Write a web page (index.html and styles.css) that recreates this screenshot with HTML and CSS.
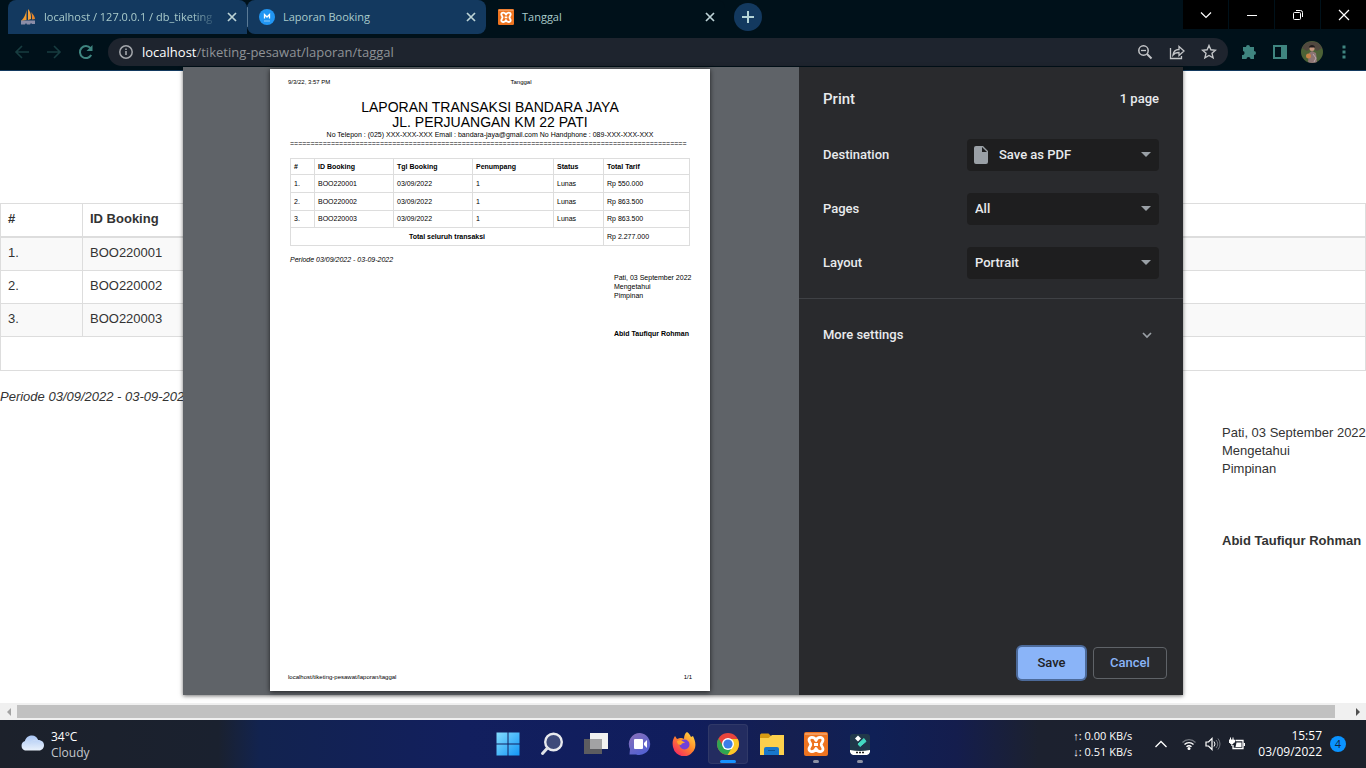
FILE: index.html
```html
<!DOCTYPE html>
<html lang="id">
<head>
<meta charset="utf-8">
<title>Tanggal</title>
<link rel="stylesheet" href="styles.css">
</head>
<body>
<svg class="defs" aria-hidden="true">
  <symbol id="close" viewBox="0 0 12 12"><path d="M2 2l8 8M10 2l-8 8" stroke="currentColor" stroke-width="1.7"/></symbol>
  <symbol id="xampp" viewBox="0 0 24 24">
    <rect width="24" height="24" rx="2" fill="#ee7420"/>
    <path d="M1 1h22v2H1z" fill="#f39a5b"/>
    <path d="M12 8.500c-1.500-4-7-4-7-.5 0 2 1.800 2.800 1.800 4.500S5 15 5 17c0 3.500 5.500 3.500 7-.5 1.500 4 7 4 7 .5 0-2-1.800-2.800-1.800-4.500S19 10 19 8c0-3.500-5.500-3.500-7 .5zM10 12.500h4" fill="none" stroke="#fff" stroke-width="2.800" stroke-linejoin="round"/>
  </symbol>
  <symbol id="caret" viewBox="0 0 10 5"><path d="M0 0h10L5 5z" fill="#9aa0a6"/></symbol>
</svg>

<header class="tabstrip">
  <nav class="tabs">
    <div class="tab">
      <svg class="favicon" viewBox="0 0 16 16"><path d="M6.500 1v10L1 12c3-3 4.500-6 5.500-11z" fill="#f29b2e"/><path d="M8 0c3 3 3 7 3 10l-3 1z" fill="#f7a23b"/><path d="M11 3c2 2 4 5 4 7l-3 .5c0-3 0-5-1-7.500z" fill="#e8862a"/><path d="M1 11.500h14v3.500h-3l-1-1-1 1.500H7L6 14l-1 1.500H1z" fill="#8b8da8"/></svg>
      <span class="tab-title faded">localhost / 127.0.0.1 / db_tiketing</span>
      <button class="tab-close" aria-label="Close tab"><svg><use href="#close"/></svg></button>
    </div>
    <div class="tab divided">
      <svg class="favicon" viewBox="0 0 16 16"><circle cx="8" cy="8" r="8" fill="#2196f3"/><path d="M5.500 9.500V5.500L8 8l2.500-2.500v4" fill="none" stroke="#fff" stroke-width="1.300"/><path d="M5 12h6" stroke="#8fcaf9"/></svg>
      <span class="tab-title">Laporan Booking</span>
      <button class="tab-close" aria-label="Close tab"><svg><use href="#close"/></svg></button>
    </div>
    <div class="tab active">
      <svg class="favicon"><use href="#xampp"/></svg>
      <span class="tab-title">Tanggal</span>
      <button class="tab-close" aria-label="Close tab"><svg><use href="#close"/></svg></button>
    </div>
    <button class="new-tab" aria-label="New tab"><svg viewBox="0 0 12 12"><path d="M6 0v12M0 6h12" stroke="currentColor" stroke-width="2"/></svg></button>
  </nav>
  <div class="window-controls">
    <button aria-label="Search tabs"><svg viewBox="0 0 12 12"><path d="M1 3.500l5 5 5-5" fill="none" stroke="#fff" stroke-width="1.200"/></svg></button>
    <button aria-label="Minimize"><svg viewBox="0 0 12 12"><path d="M1 6.500h10" stroke="#fff"/></svg></button>
    <button aria-label="Restore"><svg viewBox="0 0 12 12"><rect x="1.500" y="3.500" width="7" height="7" rx="1" fill="none" stroke="#fff"/><path d="M4 1.500h4.500a2 2 0 0 1 2 2V8" fill="none" stroke="#fff"/></svg></button>
    <button aria-label="Close"><svg viewBox="0 0 12 12"><path d="M1 1l10 10M11 1L1 11" stroke="#fff" stroke-width="1.200"/></svg></button>
  </div>
</header>

<div class="toolbar">
  <div class="nav-buttons">
    <button class="dim" aria-label="Back"><svg viewBox="0 0 16 16"><path d="M15 8H2M8 2L2 8l6 6" fill="none" stroke="currentColor" stroke-width="1.600"/></svg></button>
    <button class="dim" aria-label="Forward"><svg viewBox="0 0 16 16"><path d="M1 8h13M8 2l6 6-6 6" fill="none" stroke="currentColor" stroke-width="1.600"/></svg></button>
    <button aria-label="Reload"><svg viewBox="0 0 16 16"><path d="M13.200 11A6 6 0 1 1 12.500 4.200" fill="none" stroke="currentColor" stroke-width="2"/><path d="M14.500 1v6h-6z" fill="currentColor"/></svg></button>
  </div>
  <div class="address">
    <svg class="info" viewBox="0 0 16 16"><circle cx="8" cy="8" r="6.200" fill="none" stroke="currentColor" stroke-width="1.500"/><path d="M8 7v4M8 4.500V6" stroke="currentColor" stroke-width="1.600"/></svg>
    <span class="url"><b>localhost</b>/tiketing-pesawat/laporan/taggal</span>
    <button aria-label="Zoom"><svg viewBox="0 0 16 16"><circle cx="6.500" cy="6.500" r="4.700" fill="none" stroke="currentColor" stroke-width="1.500"/><path d="M10 10l4.500 4.500" stroke="currentColor" stroke-width="2"/><path d="M4 6.500h5" stroke="currentColor" stroke-width="1.300"/></svg></button>
    <button aria-label="Share"><svg viewBox="0 0 16 16"><path d="M1.500 4v10.500h11V12" fill="none" stroke="currentColor" stroke-width="1.300"/><path d="M4 11c.5-4 3-5.500 6-5.500V2.500L15 7l-5 4.500v-3C7 8.500 5.500 9 4 11z" fill="none" stroke="currentColor" stroke-width="1.300"/></svg></button>
    <button aria-label="Bookmark"><svg viewBox="0 0 16 16"><path d="M8 1.500l1.900 4.300 4.600.4-3.500 3.100 1.100 4.600L8 11.500l-4.100 2.400L5 9.300 1.500 6.200l4.600-.4z" fill="none" stroke="currentColor" stroke-width="1.400"/></svg></button>
  </div>
  <div class="toolbar-actions">
    <button aria-label="Extensions"><svg viewBox="0 0 16 16"><path d="M2 3h3a2 2 0 0 1 4 0h4v4a2 2 0 0 1 0 4v4H9.500a2 2 0 0 0-4 0H1v-4a2 2 0 0 0 1-4z" fill="currentColor"/></svg></button>
    <button aria-label="Side panel"><svg viewBox="0 0 16 16"><path d="M1 1h14v14H1zM3 3v10h6V3z" fill="currentColor" fill-rule="evenodd"/></svg></button>
    <button class="profile" aria-label="Profile"><svg viewBox="0 0 22 22"><circle cx="11" cy="11" r="11" fill="#4c6236"/><path d="M1 7a11 11 0 0 1 20 0l-5 3-5-4-5 4z" fill="#51483f"/><path d="M7 21l1-9 3-2 4 2 1 9a11 11 0 0 1-9 0z" fill="#8d7574"/><circle cx="11" cy="7.500" r="2.500" fill="#c5977e"/><path d="M8 6.500C8 3 14 3 14 6.500z" fill="#201b1d"/><circle cx="7.500" cy="15" r="2.500" fill="#c88346"/><path d="M12 13l3 4-2 4" stroke="#bba9ad" fill="none"/></svg></button>
    <button aria-label="Menu"><svg viewBox="0 0 16 16"><path d="M6.500 1.500h3v3h-3zM6.500 6.500h3v3h-3zM6.500 11.500h3v3h-3z" fill="currentColor"/></svg></button>
  </div>
</div>

<main class="viewport">
  <section class="report">
    <table class="report-table">
      <thead><tr><th class="col-no">#</th><th>ID Booking</th></tr></thead>
      <tbody>
        <tr><td>1.</td><td>BOO220001</td></tr>
        <tr><td>2.</td><td>BOO220002</td></tr>
        <tr><td>3.</td><td>BOO220003</td></tr>
        <tr><td colspan="2">&nbsp;</td></tr>
      </tbody>
    </table>
    <p class="period">Periode 03/09/2022 - 03-09-2022</p>
    <div class="signature">
      <p>Pati, 03 September 2022</p>
      <p>Mengetahui</p>
      <p>Pimpinan</p>
      <p class="signer">Abid Taufiqur Rohman</p>
    </div>
  </section>

  <section class="print-dialog" role="dialog" aria-label="Print">
    <div class="preview">
      <article class="sheet">
        <div class="sheet-head"><span>9/3/22, 3:57 PM</span><span>Tanggal</span><span></span></div>
        <h1>LAPORAN TRANSAKSI BANDARA JAYA<br>JL. PERJUANGAN KM 22 PATI</h1>
        <p class="contact">No Telepon : (025) XXX-XXX-XXX Email : bandara-jaya@gmail.com No Handphone : 089-XXX-XXX-XXX</p>
        <p class="rule">=================================================================================================</p>
        <table class="sheet-table">
          <colgroup><col class="c1"><col class="c2"><col class="c3"><col class="c4"><col class="c5"><col class="c6"></colgroup>
          <thead><tr><th>#</th><th>ID Booking</th><th>Tgl Booking</th><th>Penumpang</th><th>Status</th><th>Total Tarif</th></tr></thead>
          <tbody>
            <tr><td>1.</td><td>BOO220001</td><td>03/09/2022</td><td>1</td><td>Lunas</td><td>Rp 550.000</td></tr>
            <tr><td>2.</td><td>BOO220002</td><td>03/09/2022</td><td>1</td><td>Lunas</td><td>Rp 863.500</td></tr>
            <tr><td>3.</td><td>BOO220003</td><td>03/09/2022</td><td>1</td><td>Lunas</td><td>Rp 863.500</td></tr>
            <tr><th class="total" colspan="5">Total seluruh transaksi</th><td>Rp 2.277.000</td></tr>
          </tbody>
        </table>
        <p class="sheet-period">Periode 03/09/2022 - 03-09-2022</p>
        <div class="sheet-signature">
          <p>Pati, 03 September 2022</p>
          <p>Mengetahui</p>
          <p>Pimpinan</p>
          <p class="sheet-signer">Abid Taufiqur Rohman</p>
        </div>
        <footer class="sheet-foot"><span>localhost/tiketing-pesawat/laporan/taggal</span><span>1/1</span></footer>
      </article>
    </div>
    <form class="settings">
      <div class="settings-head"><h2>Print</h2><span>1 page</span></div>
      <div class="field">
        <label for="destination">Destination</label>
        <div class="picker with-icon">
          <svg class="file" viewBox="0 0 14 18"><path d="M2 0h7l5 5v11a2 2 0 0 1-2 2H2a2 2 0 0 1-2-2V2a2 2 0 0 1 2-2zm6 1v5h5z" fill="#9aa0a6" fill-rule="evenodd"/></svg>
          <select id="destination"><option>Save as PDF</option></select>
          <svg class="arrow"><use href="#caret"/></svg>
        </div>
      </div>
      <div class="field">
        <label for="pages">Pages</label>
        <div class="picker"><select id="pages"><option>All</option></select><svg class="arrow"><use href="#caret"/></svg></div>
      </div>
      <div class="field">
        <label for="layout">Layout</label>
        <div class="picker"><select id="layout"><option>Portrait</option></select><svg class="arrow"><use href="#caret"/></svg></div>
      </div>
      <button type="button" class="more">More settings<svg viewBox="0 0 10 10"><path d="M1 3l4 4 4-4" fill="none" stroke="#9aa0a6" stroke-width="1.700"/></svg></button>
      <div class="actions">
        <button type="button" class="save">Save</button>
        <button type="button" class="cancel">Cancel</button>
      </div>
    </form>
  </section>
</main>

<div class="scrollbar">
  <button aria-label="Scroll left"><svg viewBox="0 0 8 8"><path d="M6 0v8L2 4z" fill="#a3a3a3"/></svg></button>
  <div class="thumb"></div>
  <button aria-label="Scroll right"><svg viewBox="0 0 8 8"><path d="M2 0v8l4-4z" fill="#505050"/></svg></button>
</div>

<footer class="taskbar">
  <div class="weather">
    <svg viewBox="0 0 24 16"><defs><linearGradient id="cl" x2="0" y2="1"><stop stop-color="#a9c6f5"/><stop offset="1" stop-color="#e9f1fb"/></linearGradient></defs><path d="M5 15.500a5 5 0 0 1 0-9.500C6 2 9 .5 12 .5S17 2 18 5c4 0 6 2.500 6 5.200s-2 5.300-5 5.300z" fill="url(#cl)"/><path d="M5 6c3 0 4 1 5 3 1-3 4-4 8-4" fill="none" stroke="#c8dbf6"/></svg>
    <div><p>34°C</p><p class="muted">Cloudy</p></div>
  </div>
  <nav class="apps">
    <button aria-label="Start"><svg viewBox="0 0 24 24"><defs><linearGradient id="win" x2="1" y2="1"><stop stop-color="#84dcff"/><stop offset="1" stop-color="#1296f5"/></linearGradient></defs><path d="M0.500 0.500h11v11h-11zM12.500 0.500h11v11h-11zM0.500 12.500h11v11h-11zM12.500 12.500h11v11h-11z" fill="url(#win)"/></svg></button>
    <button aria-label="Search"><svg viewBox="0 0 24 24"><circle cx="13.500" cy="10" r="8.300" fill="#3d4a7a" stroke="#e8eaee" stroke-width="2.400"/><path d="M7.500 16l-5 5.500" stroke="#dfe2e8" stroke-width="3" stroke-linecap="round"/></svg></button>
    <button aria-label="Task view"><svg viewBox="0 0 24 24"><path d="M0 7h18v15H0z" fill="#5c5c60"/><path d="M6 1h18v16H6z" fill="#f1f1f1"/><path d="M6 7h12v10H6z" fill="#a2a2a4"/></svg></button>
    <button aria-label="Chat"><svg viewBox="0 0 24 24"><defs><linearGradient id="ch" x2=".6" y2="1"><stop stop-color="#8b70b8"/><stop offset="1" stop-color="#5361d2"/></linearGradient></defs><path d="M12 1a11 11 0 1 1-4 21.500H1.500L2 17A11 11 0 0 1 12 1z" fill="url(#ch)"/><rect x="6" y="7" width="9" height="10" rx="1" fill="#fff"/><path d="M16 11l3-3v8l-3-3z" fill="#fff"/></svg></button>
    <button aria-label="Firefox"><svg viewBox="0 0 24 24"><defs><linearGradient id="ff" x1="1" x2=".2" y2="1"><stop stop-color="#ffe84a"/><stop offset=".5" stop-color="#ff8a2a"/><stop offset="1" stop-color="#f52463"/></linearGradient></defs><path d="M15 0c2 1 3 3 4 5l2-1c2 4 3 8 2 12a11.300 11.300 0 0 1-22-1C0 10 1 7 3 4l2 3 3-1c2 0 3 0 4 1 0-3 1-6 3-7z" fill="url(#ff)"/><circle cx="12.500" cy="12.500" r="5" fill="#7040d8"/><path d="M5 9c4-2 6 0 8 2-2 0-3 0-4 2-2 0-4-1-4-4z" fill="#ffa52c"/></svg></button>
    <button class="current" aria-label="Chrome"><svg viewBox="0 0 24 24"><circle cx="12" cy="12" r="11" fill="#e8453c"/><path d="M2.500 6.500A11 11 0 0 0 12 23l5-8-5-3-5 2z" fill="#2ea551"/><path d="M12 7h9.800A11 11 0 0 1 11.500 23L17 14z" fill="#fbc928"/><circle cx="12" cy="12" r="6" fill="#fff"/><circle cx="12" cy="12" r="4.600" fill="#3b7de9"/></svg></button>
    <button aria-label="File Explorer"><svg viewBox="0 0 24 24"><path d="M0 3.500C0 2 1 1.500 2 1.500h6.500L11 4v3H0z" fill="#d99b12"/><path d="M0 6h8.500L12 3h12v20H0z" fill="#fdd04c"/><path d="M4 23v-6q0-2 2-2h11q2 0 2 2v6z" fill="#1876ca"/><path d="M8 18.500h7" stroke="#11528f"/></svg></button>
    <button class="running" aria-label="XAMPP"><svg><use href="#xampp"/></svg></button>
    <button class="running" aria-label="Filmora"><svg viewBox="0 0 24 24"><rect x="2" y="2" width="20" height="20" rx="3" fill="#20384a"/><path d="M10 12l6-5.500 2 3-6 5z" fill="#43dcc0" stroke="#43dcc0"/><path d="M10 3.500l3 3-3 3-3-3z" fill="#fff"/><path d="M2 18q10 2 20 0v2q-1 3-3 3H5q-2 0-3-3z" fill="#fff"/><path d="M8 20.500h8" stroke="#222" stroke-width="1.500" stroke-dasharray="2 1"/></svg></button>
  </nav>
  <div class="tray">
    <div class="speed"><p>↑: 0.00 KB/s</p><p>↓: 0.51 KB/s</p></div>
    <button class="chevron" aria-label="Hidden icons"><svg viewBox="0 0 16 16"><path d="M2.500 11L8 5.500l5.500 5.500" fill="none" stroke="#fff" stroke-width="1.300"/></svg></button>
    <div class="status">
      <svg viewBox="0 0 16 16"><path d="M1.500 6.500a9 9 0 0 1 13 0" fill="none" stroke="#73777f" stroke-width="1.200"/><path d="M3.500 8.500a6.300 6.300 0 0 1 9 0M5.500 10.800a3.500 3.500 0 0 1 5 0" fill="none" stroke="#fff" stroke-width="1.300"/><circle cx="8" cy="12.500" r="1.500" fill="#fff"/></svg>
      <svg viewBox="0 0 16 16"><path d="M1 6h2.500L7 2.500v11L3.500 10H1z" fill="none" stroke="#fff" stroke-width="1.200"/><path d="M9 5.500q2 2.500 0 5" fill="none" stroke="#fff"/><path d="M11 4q3.500 4 0 8M13 2.500q4 5.500 0 11" fill="none" stroke="#73777f"/></svg>
      <svg viewBox="0 0 16 16"><path d="M6.500 4.500h7.500v8H4V9" fill="none" stroke="#fff" stroke-width="1.300"/><path d="M7.500 6.500h5v4.500h-6z" fill="#fff"/><path d="M15.300 7v3" stroke="#fff" stroke-width="1.400"/><path d="M1.500 1.500V4M4 1.500V4M0 4h5.500v2L4 7.500H1.500L0 6zM2.800 7.500V10" fill="#fff" stroke="#fff"/></svg>
    </div>
    <div class="clock"><p>15:57</p><p>03/09/2022</p></div>
    <span class="badge">4</span>
  </div>
</footer>
</body>
</html>
```

FILE: styles.css
```css
* { box-sizing: border-box; }

body {
  margin: 0;
  height: 100vh;
  display: flex;
  flex-direction: column;
  overflow: hidden;
  background: #fff;
  font: 12px/16px "Open Sans", sans-serif;
}

p, h1, h2 { margin: 0; font-weight: 400; }

button {
  border: 0;
  padding: 0;
  background: none;
  color: inherit;
  font: inherit;
  display: flex;
  align-items: center;
  justify-content: center;
}

svg { display: block; flex: none; }
.defs { position: absolute; width: 0; height: 0; }

/* Tab strip */
.tabstrip {
  height: 34px;
  display: flex;
  justify-content: space-between;
  align-items: flex-start;
  background: #00111a;
  color: #a9cbcb;
}
.tabs { display: flex; align-items: center; padding-left: 8px; }
.tab {
  width: 239px;
  height: 34px;
  padding: 0 9px 0 12px;
  display: flex;
  align-items: center;
  gap: 8px;
  background: #13395f;
  border-radius: 8px 8px 0 0;
}
.tab.divided { border-radius: 8px; background: linear-gradient(#5a7a96, #5a7a96) 0 50% / 1px 20px no-repeat #13395f; }
.tab.active { background: #00111a; }
.favicon { width: 16px; height: 16px; }
.tab-title { flex: 1; min-width: 0; font-size: 11px; white-space: nowrap; }
.faded { -webkit-mask-image: linear-gradient(90deg, #000 85%, transparent); mask-image: linear-gradient(90deg, #000 85%, transparent); }
.tab-close svg { width: 12px; height: 12px; color: #bcd3d6; }
.new-tab { width: 28px; height: 28px; margin-left: 9px; border-radius: 50%; background: #13395f; color: #b4d3d6; }
.new-tab svg { width: 12px; height: 12px; }
.window-controls { display: flex; gap: 1px; }
.window-controls button { width: 45px; height: 29px; background: #000; }
.window-controls svg { width: 12px; height: 12px; }

/* Toolbar */
.toolbar {
  height: 37px;
  padding: 4px 14px 5px 14px;
  display: flex;
  align-items: center;
  background: #00111a;
  border-bottom: 1px solid #13395f;
  color: #3f8580;
}
.toolbar svg { width: 16px; height: 16px; }
.nav-buttons { display: flex; gap: 16px; margin-right: 14px; }
.dim { color: #173d40; }
.address {
  flex: 1;
  height: 28px;
  padding: 0 11px 0 10px;
  display: flex;
  align-items: center;
  gap: 16px;
  border-radius: 14px;
  background: #1e242e;
  color: #c3c5c8;
}
.address .info { color: #a4a7ac; }
.url { flex: 1; margin-left: -8px; font-size: 13px; color: #8f9397; }
.url b { font-weight: 400; color: #fff; }
.toolbar-actions { display: flex; align-items: center; gap: 15px; margin-left: 13px; }
.toolbar-actions .profile { margin: 0 -2px; }
.toolbar .profile svg { width: 22px; height: 22px; }

/* Page under the dialog */
.viewport { flex: 1; position: relative; background: #fff; min-height: 0; }
.report { padding-top: 132px; font: 13px/18px "Liberation Sans", Arial, sans-serif; color: #333; }
.report-table { width: 100%; border-collapse: collapse; }
.report-table th, .report-table td { height: 33px; padding: 6px 7px 8px; border: 1px solid #ddd; text-align: left; vertical-align: top; }
.report-table .col-no { width: 82px; }
.report-table th { border-bottom-width: 2px; }
.report-table tbody tr:nth-child(odd) td { background: #f9f9f9; }
.report-table tbody tr:last-child td { height: 34px; background: #fff; }
.period { margin-top: 17px; font-style: italic; }
.signature { width: 144px; margin: 18px 0 0 auto; white-space: nowrap; }
.signer { margin-top: 54px; font-weight: 700; }

/* Print dialog */
.print-dialog {
  position: absolute;
  top: -4px;
  bottom: 8px;
  left: 50%;
  width: 1000px;
  margin-left: -500px;
  display: flex;
  box-shadow: 0 1px 4px rgba(0, 0, 0, .55);
}
.preview { flex: 1; padding: 2px 2px 4px 0; display: flex; justify-content: center; background: #5f6368; }
.sheet {
  width: 440px;
  padding: 9px 20px;
  display: flex;
  flex-direction: column;
  background: #fff;
  color: #000;
  box-shadow: 0 1px 5px rgba(0, 0, 0, .7);
  font: 7px/9px "Liberation Sans", Arial, sans-serif;
}
.sheet p { white-space: nowrap; }
.sheet-head, .sheet-foot { display: flex; justify-content: space-between; margin: 0 -2px; font-size: 6px; }
.sheet-head span { flex: 1; }
.sheet-head span:nth-child(2) { flex: 2; text-align: center; padding-left: 62px; }
.sheet h1 { margin-top: 13px; font-size: 14px; line-height: 15px; text-align: center; }
.sheet .contact { text-align: center; }
.sheet-table { margin-top: 10px; width: 100%; height: 88px; border-collapse: collapse; table-layout: fixed; }
.sheet-table th, .sheet-table td { padding: 3px; border: 1px solid #ddd; text-align: left; line-height: 9px; }
.sheet-table .total { text-align: center; }
.c1 { width: 24px; }
.c2, .c3 { width: 79px; }
.c4 { width: 81px; }
.c5 { width: 50px; }
.sheet-period { margin-top: 9px; font-style: italic; }
.sheet-signature { width: 76px; margin: 9px 0 0 auto; }
.sheet-signer { margin-top: 29px; font-weight: 700; }
.sheet-foot { margin-top: auto; }

.settings {
  width: 384px;
  display: flex;
  flex-direction: column;
  background: #292a2d;
  color: #e8eaed;
  font: 500 13px/20px Roboto, sans-serif;
}
.settings-head { display: flex; justify-content: space-between; align-items: center; padding: 22px 24px 19px; margin-bottom: 11px; }
.settings h2 { font-size: 15px; font-weight: 500; }
.field { display: flex; justify-content: space-between; align-items: center; height: 32px; margin: 0 24px 22px; }
.picker { position: relative; width: 192px; }
.picker select {
  appearance: none;
  width: 100%;
  height: 32px;
  padding: 0 8px;
  border: 0;
  border-radius: 4px;
  background: #1e1e1f;
  color: #e8eaed;
  font: inherit;
}
.picker.with-icon select { padding-left: 32px; }
.file { position: absolute; left: 7px; top: 7px; width: 14px; height: 18px; }
.arrow { position: absolute; right: 8px; top: 13px; width: 10px; height: 5px; }
.more { justify-content: space-between; height: 72px; margin-top: -3px; padding: 0 31px 0 24px; border-top: 1px solid #3f4145; }
.more svg { width: 10px; height: 10px; }
.actions { display: flex; gap: 8px; justify-content: flex-end; margin-top: auto; padding: 16px; }
.actions button { height: 32px; border-radius: 4px; }
.actions .save { width: 67px; background: #8ab4f8; color: #202124; box-shadow: 0 0 0 2px #4c6a9a; }
.actions .cancel { width: 74px; border: 1px solid #5f6368; color: #8ab4f8; }

/* Horizontal scrollbar */
.scrollbar { height: 17px; display: flex; align-items: center; background: #f0f0f0; }
.scrollbar button { width: 17px; height: 17px; }
.scrollbar svg { width: 8px; height: 8px; }
.scrollbar .thumb { flex: 1; height: 13px; margin-right: 14px; background: #c1c1c1; }

/* Taskbar */
.taskbar {
  height: 48px;
  display: grid;
  grid-template-columns: 1fr auto 1fr;
  align-items: center;
  background: linear-gradient(90deg, #1c212b 0, #1a212f 16%, #12234f 19%, #121f5e 34%, #101d5d 50%, #151f50 58%, #0f2056 64%, #141d4d 70%, #1c212f 76%, #1c212b 100%);
  color: #fff;
}
.weather { display: flex; align-items: center; gap: 7px; padding: 1px 0 0 20px; }
.weather svg { width: 24px; height: 16px; margin-bottom: 4px; }
.muted { color: #c5c8cc; }
.apps { display: flex; gap: 4px; padding-left: 2px; }
.apps button { position: relative; width: 40px; height: 40px; border-radius: 4px; }
.apps svg { width: 24px; height: 24px; }
.apps .current { background: #232c60; box-shadow: inset 0 0 0 1px #303968; }
.apps .current::after, .apps .running::after { content: ""; position: absolute; bottom: 1px; width: 6px; height: 3px; border-radius: 2px; background: #8d92a4; }
.apps .current::after { width: 16px; background: #1692ff; }
.tray { display: flex; align-items: center; justify-content: flex-end; padding-right: 20px; }
.tray svg { width: 16px; height: 16px; }
.speed { font-size: 11px; white-space: nowrap; }
.chevron { margin: 0 12px 0 21px; }
.status { display: flex; gap: 8px; margin-right: 13px; }
.clock { text-align: right; }
.badge { width: 16px; height: 16px; margin-left: 8px; border-radius: 50%; background: #0a93ff; color: #10253f; font-size: 11px; text-align: center; }
```
